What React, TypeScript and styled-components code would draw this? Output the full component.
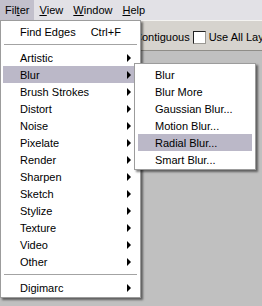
import styled, { createGlobalStyle } from "styled-components";

const GlobalStyle = createGlobalStyle`
    html, body {
        margin: 0;
        padding: 0;
        background: #c0c0c0;
    }
    body {
        font-family: "Liberation Sans", Arial, sans-serif;
        font-size: 11px;
        color: #000;
    }
`

const Screen = styled.div`
    position: relative;
    width: 262px;
    height: 306px;
    overflow: hidden;
    display: flex;
    flex-direction: column;
    background: #c0c0c0;
`

// menu bar
const MenuBar = styled.div`
    height: 20px;
    display: flex;
    align-items: stretch;
    background: #e2e1e6;
`

const BarItem = styled.div`
    padding: 0 5px;
    display: flex;
    align-items: center;
    background: ${(props: { $open: boolean }) => props.$open ? "#c2c0cc" : "transparent"};
`

const Key = styled.span`
    text-decoration: underline;
`

// options bar
const OptionsBar = styled.div`
    height: 31px;
    display: flex;
    align-items: center;
    gap: 3px;
    padding: 3px 0 0 118px;
    box-sizing: border-box;
    background: #d6d3ce;
    border-top: 1px solid #f4f3f1;
    border-bottom: 1px solid #8f8d88;
`

const Check = styled.span`
    width: 11px;
    height: 11px;
    flex: none;
    background: #fff;
    border-top: 1px solid #222;
    border-left: 1px solid #222;
    border-right: 1px solid #9a9893;
    border-bottom: 1px solid #9a9893;
`

const OptionLabel = styled.span`
    white-space: nowrap;
`

const Workspace = styled.div`
    flex: 1;
    background: #c0c0c0;
`

// dropdown menus
const Dropdown = styled.div`
    position: absolute;
    box-sizing: border-box;
    background: #fff;
    border: 1px solid #9c9c9c;
    box-shadow: 2px 2px 2px rgba(0, 0, 0, 0.5);
    padding: 2px 2px;
`

const FilterMenu = styled(Dropdown)`
    left: 0;
    top: 20px;
    width: 141px;
    padding-bottom: 1px;
`

const BlurMenu = styled(Dropdown)`
    left: 131px;
    top: -3px;
    width: 122px;
    padding: 2px 3px 1px;
`

const Row = styled.div`
    position: relative;
    height: 17px;
    display: flex;
    align-items: center;
    padding: 0 7px 0 17px;
    white-space: nowrap;
    background: ${(props: { $active?: boolean }) => props.$active ? "#bbb8c8" : "transparent"};
`

const Label = styled.span`
    flex: 1;
`

const Shortcut = styled.span`
    flex: 1;
    padding-left: 15px;
`

const Arrow = styled.span`
    width: 0;
    height: 0;
    border-left: 4px solid #000;
    border-top: 4px solid transparent;
    border-bottom: 4px solid transparent;
`

const Separator = styled.div`
    height: 9px;
    display: flex;
    align-items: center;
    padding: 0 1px;
    &::after {
        content: "";
        flex: 1;
        height: 1px;
        background: #a3a3a3;
    }
`

const groups = ["Artistic", "Blur", "Brush Strokes", "Distort", "Noise", "Pixelate", "Render",
    "Sharpen", "Sketch", "Stylize", "Texture", "Video", "Other"]

const blurItems = ["Blur", "Blur More", "Gaussian Blur...", "Motion Blur...", "Radial Blur...", "Smart Blur..."]

const App = () => {
    return (
        <>
            <GlobalStyle />
            <Screen>
                <MenuBar>
                    <BarItem $open={true}>Fil<Key>t</Key>er</BarItem>
                    <BarItem $open={false}><Key>V</Key>iew</BarItem>
                    <BarItem $open={false}><Key>W</Key>indow</BarItem>
                    <BarItem $open={false}><Key>H</Key>elp</BarItem>
                </MenuBar>
                <OptionsBar>
                    <Check />
                    <OptionLabel>Contiguous</OptionLabel>
                    <Check />
                    <OptionLabel>Use All Layers</OptionLabel>
                </OptionsBar>
                <Workspace />

                <FilterMenu>
                    <Row>
                        <span>Find Edges</span>
                        <Shortcut>Ctrl+F</Shortcut>
                    </Row>
                    <Separator />
                    {groups.map(name => (
                        <Row key={name} $active={name === "Blur"}>
                            <Label>{name}</Label>
                            <Arrow />
                            {name === "Blur" && (
                                <BlurMenu>
                                    {blurItems.map(item => (
                                        <Row key={item} $active={item === "Radial Blur..."}>
                                            <Label>{item}</Label>
                                        </Row>
                                    ))}
                                </BlurMenu>
                            )}
                        </Row>
                    ))}
                    <Separator />
                    <Row>
                        <Label>Digimarc</Label>
                        <Arrow />
                    </Row>
                </FilterMenu>
            </Screen>
        </>
    )
}

export default App;
